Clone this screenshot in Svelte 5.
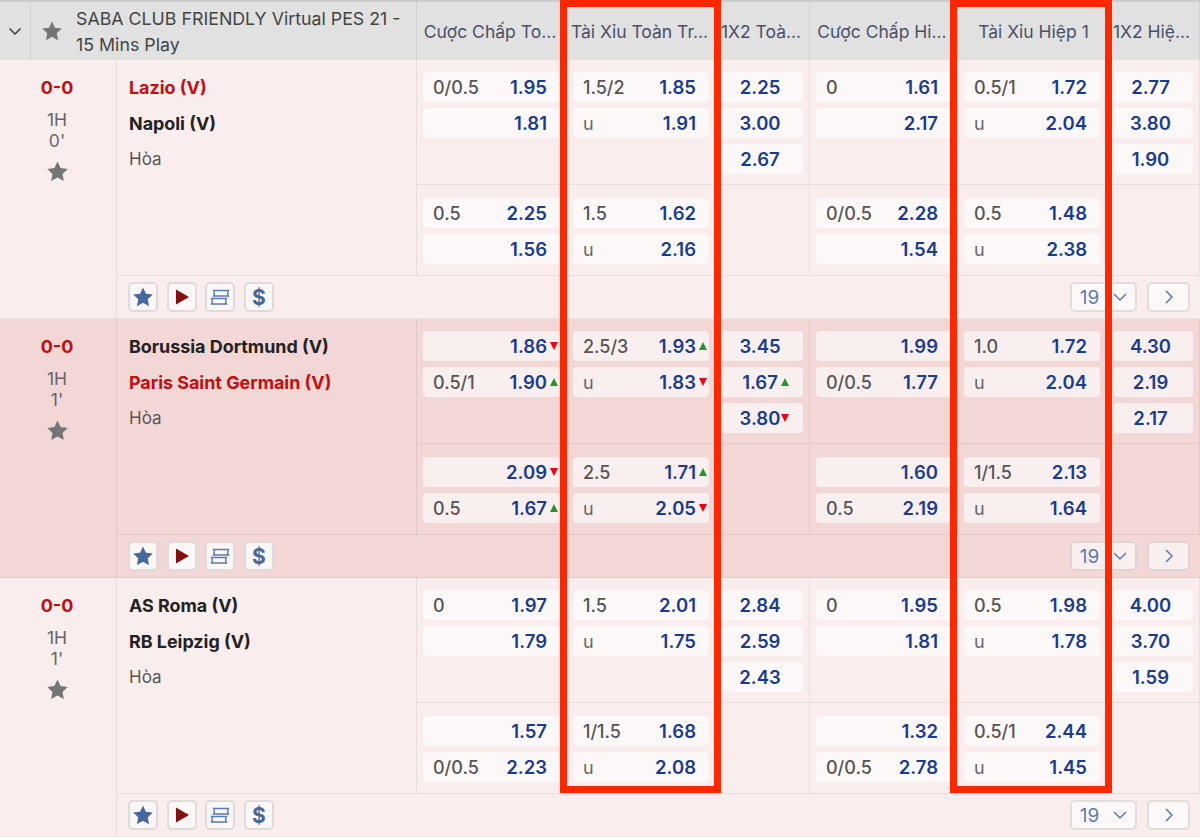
<script>
	const cols = ['Cược Chấp To...', 'Tài Xỉu Toàn Tr...', '1X2 Toà...', 'Cược Chấp Hi...', 'Tài Xỉu Hiệp 1', '1X2 Hiệ...'];

	const matches = [
		{
			time: "0'", home: 'Lazio (V)', away: 'Napoli (V)', red: 'home', shade: false,
			top: [
				[['0/0.5', '1.95'], ['', '1.81']],
				[['1.5/2', '1.85'], ['u', '1.91']],
				[['', '2.25'], ['', '3.00'], ['', '2.67']],
				[['0', '1.61'], ['', '2.17']],
				[['0.5/1', '1.72'], ['u', '2.04']],
				[['', '2.77'], ['', '3.80'], ['', '1.90']]
			],
			bottom: [
				[['0.5', '2.25'], ['', '1.56']],
				[['1.5', '1.62'], ['u', '2.16']],
				[],
				[['0/0.5', '2.28'], ['', '1.54']],
				[['0.5', '1.48'], ['u', '2.38']],
				[]
			]
		},
		{
			time: "1'", home: 'Borussia Dortmund (V)', away: 'Paris Saint Germain (V)', red: 'away', shade: true,
			top: [
				[['', '1.86', 'down'], ['0.5/1', '1.90', 'up']],
				[['2.5/3', '1.93', 'up'], ['u', '1.83', 'down']],
				[['', '3.45'], ['', '1.67', 'up'], ['', '3.80', 'down']],
				[['', '1.99'], ['0/0.5', '1.77']],
				[['1.0', '1.72'], ['u', '2.04']],
				[['', '4.30'], ['', '2.19'], ['', '2.17']]
			],
			bottom: [
				[['', '2.09', 'down'], ['0.5', '1.67', 'up']],
				[['2.5', '1.71', 'up'], ['u', '2.05', 'down']],
				[],
				[['', '1.60'], ['0.5', '2.19']],
				[['1/1.5', '2.13'], ['u', '1.64']],
				[]
			]
		},
		{
			time: "1'", home: 'AS Roma (V)', away: 'RB Leipzig (V)', red: '', shade: false,
			top: [
				[['0', '1.97'], ['', '1.79']],
				[['1.5', '2.01'], ['u', '1.75']],
				[['', '2.84'], ['', '2.59'], ['', '2.43']],
				[['0', '1.95'], ['', '1.81']],
				[['0.5', '1.98'], ['u', '1.78']],
				[['', '4.00'], ['', '3.70'], ['', '1.59']]
			],
			bottom: [
				[['', '1.57'], ['0/0.5', '2.23']],
				[['1/1.5', '1.68'], ['u', '2.08']],
				[],
				[['', '1.32'], ['0/0.5', '2.78']],
				[['0.5/1', '2.44'], ['u', '1.45']],
				[]
			]
		}
	];

	const star = 'M12 1.5l3.2 6.9 7.5.9-5.5 5.2 1.4 7.5-6.6-3.7-6.6 3.7 1.4-7.5L1.3 9.3l7.5-.9z';
</script>

{#snippet oddsCell(list, i)}
	<div class="cell">
		{#each list as [label, value, move]}
			<div class="pill" class:wide={i % 3 === 2}>
				{#if i % 3 !== 2}<span class="line" class:side={label === 'u'}>{label}</span>{/if}
				<span class="price">{value}</span>
				{#if move}<span class="arrow {move}"></span>{/if}
			</div>
		{/each}
	</div>
{/snippet}

<div class="page">
	<div class="head">
		<div class="toggle">
			<svg width="14" height="14" viewBox="0 0 14 14"><path d="M1.5 4.5L7 10l5.500-5.500" fill="none" stroke="#333" stroke-width="1.4" /></svg>
		</div>
		<div class="league">
			<svg class="star" width="22" height="22" viewBox="0 0 24 24"><path d={star} fill="#757575" /></svg>
			<span>SABA CLUB FRIENDLY Virtual PES 21 - 15 Mins Play</span>
		</div>
		{#each cols as col}
			<div class="col-title"><span>{col}</span></div>
		{/each}
	</div>

	{#each matches as m}
		<div class="match" class:shade={m.shade}>
			<div class="score">
				<b>0-0</b>
				<span class="clock">1H<br />{m.time}</span>
				<svg width="23" height="23" viewBox="0 0 24 24"><path d={star} fill="#757575" /></svg>
			</div>
			<div class="main">
				<div class="grid">
					<div class="teams">
						<div class="team" class:red={m.red === 'home'}>{m.home}</div>
						<div class="team" class:red={m.red === 'away'}>{m.away}</div>
						<div class="draw">Hòa</div>
					</div>
					{#each m.top as list, i}
						{@render oddsCell(list, i)}
					{/each}
					{#each m.bottom as list, i}
						{@render oddsCell(list, i)}
					{/each}
				</div>
				<div class="tools">
					<button class="tool" aria-label="favourite">
						<svg width="22" height="22" viewBox="0 0 24 24"><path d={star} fill="#46689c" /></svg>
					</button>
					<button class="tool" aria-label="play">
						<svg width="16" height="16" viewBox="0 0 16 16"><path d="M2 .5L15 8 2 15.500z" fill="#860f0f" /></svg>
					</button>
					<button class="tool" aria-label="bets">
						<svg width="20" height="17" viewBox="0 0 20 17" fill="none" stroke="#5b7cae" stroke-width="1.3"><path d="M3.500 1.500H18.500c-1 1.500-1 4 0 5.500H3.500c1-1.500 1-4 0-5.500z" /><path d="M1.500 9.500H16.500c-1 1.500-1 4 0 5.500H1.500c1-1.500 1-4 0-5.500z" /></svg>
					</button>
					<button class="tool dollar">$</button>
					<div class="pager">
						<button class="pick">19
							<svg width="14" height="14" viewBox="0 0 14 14"><path d="M1 4L7 10 13 4" fill="none" stroke="#5b7cae" stroke-width="1.500" /></svg>
						</button>
						<button class="next" aria-label="next">
							<svg width="14" height="14" viewBox="0 0 14 14"><path d="M4 1L10 7 4 13" fill="none" stroke="#5b7cae" stroke-width="1.500" /></svg>
						</button>
					</div>
				</div>
			</div>
		</div>
	{/each}

	<div class="mark one"></div>
	<div class="mark two"></div>
</div>

<style>
	:global(body) {
		margin: 0;
		overflow: hidden;
	}

	.page {
		position: relative;
		width: 1200px;
		height: 837px;
		overflow: hidden;
		font-family: Inter, 'Noto Sans', sans-serif;
		font-size: 18px;
		color: #222;
		background: #f9eded;
	}

	.head {
		display: grid;
		grid-template-columns: 31px 386px 150px 149px 94px 148px 149px 93px;
		height: 60px;
		box-sizing: border-box;
		border-top: 2px solid #ccc;
		background: #e1e1e1;
	}

	.toggle {
		display: flex;
		align-items: center;
		justify-content: center;
		border-right: 1px solid #cfcfcf;
	}

	.league {
		display: flex;
		align-items: center;
		gap: 13px;
		padding: 0 10px;
		border-right: 1px solid #cfcfcf;
		color: #444;
		font-size: 17.800px;
		line-height: 26px;
	}

	.league span {
		padding-top: 2px;
	}

	.star {
		flex: none;
	}

	.col-title {
		display: flex;
		align-items: center;
		justify-content: center;
		min-width: 0;
		padding-right: 3px;
		border-right: 1px solid #d2d2d2;
		color: #4a5068;
		font-size: 17.500px;
		white-space: nowrap;
	}

	.col-title:nth-child(7) {
		padding: 0 0 0 3px;
	}

	.match {
		display: grid;
		grid-template-columns: 117px 1fr;
		height: 259px;
		box-sizing: border-box;
		border-bottom: 1px solid rgba(0, 0, 0, 0.06);
		background: #f9eded;
	}

	.match.shade {
		background: #f3d6d6;
	}

	.score {
		display: flex;
		flex-direction: column;
		align-items: center;
		border-right: 1px solid rgba(0, 0, 0, 0.07);
		padding-top: 17px;
		padding-right: 2px;
		color: #666;
		text-align: center;
	}

	.score b {
		color: #c00d0d;
		font-weight: 700;
		line-height: 22px;
	}

	.clock {
		margin-top: 10px;
		line-height: 21px;
		font-size: 17.500px;
	}

	.score svg {
		margin-top: 9px;
	}

	.main {
		display: flex;
		flex-direction: column;
	}

	.grid {
		display: grid;
		grid-template-columns: 300px 150px 149px 94px 148px 149px 93px;
		grid-template-rows: 125px 90px;
		border-bottom: 1px solid rgba(0, 0, 0, 0.06);
	}

	.teams {
		grid-row: 1 / 3;
		padding: 13px 0 0 12px;
		border-right: 1px solid rgba(0, 0, 0, 0.07);
	}

	.team,
	.draw {
		height: 36px;
		line-height: 30px;
	}

	.team {
		font-weight: 700;
		font-size: 17.900px;
	}

	.team.red {
		color: #c70d0d;
	}

	.draw {
		color: #555;
		font-size: 17px;
		line-height: 28px;
	}

	.cell {
		display: flex;
		flex-direction: column;
		gap: 6px;
		padding: 12px 6px 0;
		border-right: 1px solid rgba(0, 0, 0, 0.06);
		border-bottom: 1px solid rgba(0, 0, 0, 0.06);
	}

	.cell:nth-last-child(-n + 6) {
		border-bottom: 0;
		padding-top: 13px;
	}

	.pill {
		position: relative;
		display: flex;
		align-items: center;
		justify-content: space-between;
		height: 30px;
		padding: 0 13px 0 10px;
		border-radius: 4px;
		background: rgba(255, 255, 255, 0.6);
	}

	.pill.wide {
		justify-content: center;
		padding: 0 5px 0 0;
	}

	.line {
		color: #555;
		font-weight: 500;
		font-size: 18px;
	}

	.line.side {
		font-weight: 400;
		color: #666;
	}

	.price {
		color: #173c92;
		font-weight: 600;
		font-size: 18.500px;
	}

	.arrow {
		position: absolute;
		right: 2px;
		top: 11px;
		width: 0;
		height: 0;
		border-left: 4.500px solid transparent;
		border-right: 4.500px solid transparent;
	}

	.pill.wide .arrow {
		right: 14px;
	}

	.arrow.up {
		border-bottom: 8px solid #24962f;
	}

	.arrow.down {
		border-top: 8px solid #f5000f;
	}

	.tools {
		flex: 1;
		display: flex;
		align-items: center;
		gap: 8.600px;
		padding: 0 10px 0 11px;
	}

	button {
		box-sizing: border-box;
		display: flex;
		align-items: center;
		justify-content: center;
		height: 30px;
		padding: 0;
		border: 2px solid rgba(0, 0, 0, 0.11);
		border-radius: 5px;
		background: rgba(255, 255, 255, 0.6);
		font-family: inherit;
		color: #5b7cae;
	}

	.tool {
		width: 30px;
		background: #fbf7f7;
	}

	.dollar {
		color: #46689c;
		font-weight: 700;
		font-size: 21px;
	}

	.pager {
		display: flex;
		gap: 10px;
		margin-left: auto;
	}

	.pick {
		width: 67px;
		gap: 14px;
		font-size: 19px;
	}

	.next {
		width: 43px;
	}

	.mark {
		position: absolute;
		top: 0;
		height: 793px;
		box-sizing: border-box;
		border: 7px solid #ff2600;
		pointer-events: none;
	}

	.mark.one {
		left: 560px;
		width: 161px;
	}

	.mark.two {
		left: 950px;
		width: 162px;
	}
</style>
